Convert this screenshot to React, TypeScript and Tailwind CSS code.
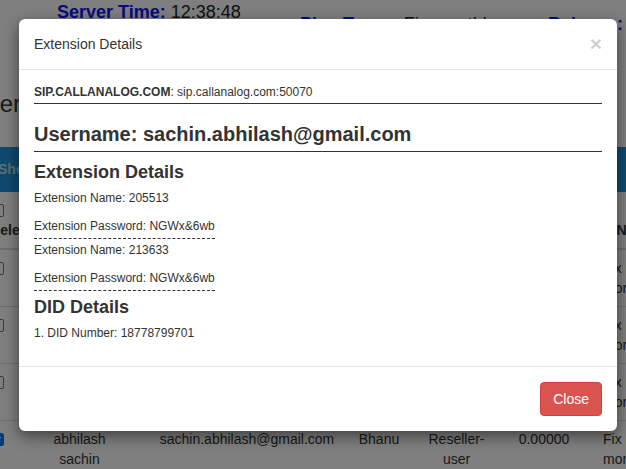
import React from "react";

function Box({ checked = false }: { checked?: boolean }) {
  return (
    <span
      className={
        "inline-block w-[13px] h-[13px] mt-[4px] rounded-[2px] border align-top " +
        (checked ? "bg-[#0075ff] border-[#0075ff]" : "bg-white border-[#767676]")
      }
    >
      {checked ? (
        <svg viewBox="0 0 13 13" className="w-[11px] h-[11px]">
          <path d="M2.5 6.5 L5 9 L10 3.5" stroke="white" strokeWidth="2" fill="none" />
        </svg>
      ) : null}
    </span>
  );
}

const cols = "grid grid-cols-[29px_135px_200px_64px_91px_84px_120px]";

function Row({
  name,
  email,
  parent,
  checked,
}: {
  name: [string, string];
  email: string;
  parent: string;
  checked?: boolean;
}) {
  return (
    <div className={cols + " border-b border-[#dddddd] text-[14px] leading-[20px] text-[#333]"}>
      <div className="py-[8px] pl-[8px]">
        <Box checked={checked} />
      </div>
      <div className="p-[8px] text-center">
        {name[0]}
        <br />
        {name[1]}
      </div>
      <div className="p-[8px] text-center">{email}</div>
      <div className="py-[8px] text-center">{parent}</div>
      <div className="p-[8px] text-center">Reseller-user</div>
      <div className="p-[8px] text-center">0.00000</div>
      <div className="py-[8px] pl-[17px] text-left whitespace-nowrap">
        Fix <span className="text-[#f0ad4e]">plan</span>
        <br />
        more
      </div>
    </div>
  );
}

export default function App() {
  return (
    <div className="relative w-[626px] h-[469px] overflow-hidden bg-white font-['Liberation_Sans',Arial,sans-serif] text-[#333]">
      {/* page behind the modal */}
      <div className="h-[14px] pt-[2px] pl-[57px] text-[18px] leading-[20px] whitespace-nowrap text-[#222]">
        <b className="text-[#1414ff]">Server Time:</b> 12:38:48
      </div>
      <div className="flex h-[20px] text-[18px] leading-[20px] whitespace-nowrap font-bold">
        <span className="ml-[300px] text-[#1414ff]">Plan Type:</span>
        <span className="ml-[14px] font-normal text-[#222]">Fix monthly</span>
        <span className="ml-auto mr-[3px] text-[#1414ff]">Balance:</span>
      </div>
      <div className="mt-[57px] ml-[-67px] text-[24px] leading-[26px] whitespace-nowrap text-[#333]">
        Resellers List
      </div>
      <div className="mt-[30px] ml-[-17px] w-[723px]">
        <div className="h-[45px] bg-[#1e94dc] flex items-center pl-[15px] text-[14px] font-bold text-white/70 whitespace-nowrap">
          Show 10 entries
        </div>
        <div className={cols + " items-end border-b-2 border-[#dddddd] text-[14px] leading-[20px] font-bold text-[#333]"}>
          <div className="py-[8px] pl-[8px] whitespace-nowrap">
            <div className="h-[20px]">
              <Box />
            </div>
            <div>Select</div>
          </div>
          <div className="p-[8px] text-center">Name</div>
          <div className="p-[8px] text-center">Email</div>
          <div className="py-[8px] text-center">Parent</div>
          <div className="p-[8px] text-center">Type</div>
          <div className="p-[8px] text-center">Balance</div>
          <div className="py-[8px] ml-[-3px] whitespace-nowrap">Plan Name</div>
        </div>
        <Row name={["rahul", "kumar"]} email="rahul.kumar@gmail.com" parent="Bhanu" />
        <Row name={["amit", "sharma"]} email="amit.sharma@gmail.com" parent="Bhanu" />
        <Row name={["vivek", "singh"]} email="vivek.singh@gmail.com" parent="Bhanu" />
        <Row name={["abhilash", "sachin"]} email="sachin.abhilash@gmail.com" parent="Bhanu" checked />
      </div>

      {/* backdrop */}
      <div className="absolute inset-0 bg-black/50" />

      {/* modal */}
      <div className="absolute left-[19px] top-[19px] w-[598px] rounded-[6px] bg-white shadow-[0_5px_15px_rgba(0,0,0,0.5)] text-[#333]">
        <div className="flex items-start justify-between p-[15px] border-b border-[#e5e5e5]">
          <div className="text-[14px] leading-[20px]">Extension Details</div>
          <div className="text-[21px] leading-[21px] font-bold text-black/20 mt-[-1px]">×</div>
        </div>
        <div className="px-[15px] pt-[15px] pb-[24px]">
          <div className="text-[12px] leading-[14px] pb-[4px] border-b border-[#333]">
            <b>SIP.CALLANALOG.COM</b>: sip.callanalog.com:50070
          </div>
          <div className="mt-[19px] text-[20px] leading-[22px] font-bold pb-[6px] border-b border-[#333]">
            Username: sachin.abhilash@gmail.com
          </div>
          <div className="mt-[10px] text-[18px] leading-[20px] font-bold">Extension Details</div>
          <div className="mt-[8px] text-[12px] leading-[17px]">Extension Name: 205513</div>
          <div className="mt-[11px] w-fit text-[12px] leading-[17px] pb-[3px] border-b border-dashed border-[#333]">
            Extension Password: NGWx&amp;6wb
          </div>
          <div className="mt-[3px] text-[12px] leading-[17px]">Extension Name: 213633</div>
          <div className="mt-[11px] w-fit text-[12px] leading-[17px] pb-[3px] border-b border-dashed border-[#333]">
            Extension Password: NGWx&amp;6wb
          </div>
          <div className="mt-[6px] text-[18px] leading-[20px] font-bold">DID Details</div>
          <div className="mt-[8px] text-[12px] leading-[17px]">1. DID Number: 18778799701</div>
        </div>
        <div className="flex justify-end p-[15px] border-t border-[#e5e5e5]">
          <button className="px-[12px] py-[6px] text-[14px] leading-[20px] text-white bg-[#d9534f] border border-[#d43f3a] rounded-[4px]">
            Close
          </button>
        </div>
      </div>
    </div>
  );
}
